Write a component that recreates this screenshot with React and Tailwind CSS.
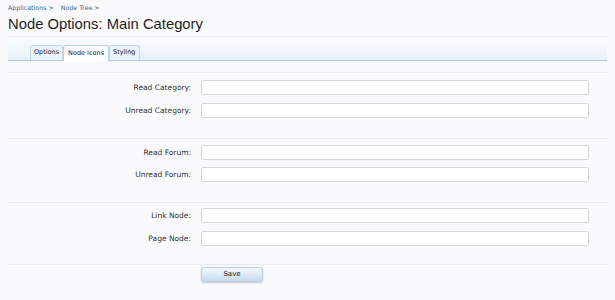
import React from 'react';

function Row({ label }) {
  return (
    <div className="flex items-center">
      <label className="w-[183px] text-right text-[7.5px] text-[#333]">{label}</label>
      <input type="text" className="ml-[10px] h-[15px] w-[388px] rounded-[2px] border border-[#d8d8d8] bg-white outline-none" />
    </div>
  );
}

export default function App() {
  const tabs = ['Options', 'Node Icons', 'Styling'];
  return (
    <div className="h-[300px] w-[615px] overflow-hidden bg-[#fafafc] px-[8px] font-['DejaVu_Sans',sans-serif]">
      {/* breadcrumb */}
      <div className="flex gap-[7px] pt-[3px] text-[6.3px] leading-[9px] text-[#356392]">
        <span>Applications &gt;</span>
        <span>Node Tree &gt;</span>
      </div>
      <h1 className="h-[24px] pt-[1px] font-['Liberation_Sans',sans-serif] text-[14.8px] leading-[22px] text-[#1e1e1e]">
        Node Options: Main Category
      </h1>

      {/* tab bar */}
      <div className="flex h-[25px] items-end border-t border-b border-t-[#e6ebf2] border-b-[#a9c8e6] bg-gradient-to-b from-[#fbfcfe] to-[#e7f0f9] pl-[22px]">
        {tabs.map((t) => (
          <div
            key={t}
            className={
              t === 'Node Icons'
                ? '-mb-px flex h-[16px] items-center rounded-t-[3px] border border-b-0 border-[#b8d0e8] bg-white px-[4px] text-[6.5px] text-[#222]'
                : 'flex h-[15px] items-center rounded-t-[3px] border border-b-0 border-[#c4d7ea] bg-[#eaf2fa] px-[3px] text-[6.5px] text-[#222]'
            }
          >
            {t}
          </div>
        ))}
      </div>

      {/* form */}
      <div className="mt-[11px]">
        <div className="flex flex-col gap-[8px] border-t border-[#e9eaf0] pt-[7px] pb-[20px]">
          <Row label="Read Category:" />
          <Row label="Unread Category:" />
        </div>
        <div className="flex flex-col gap-[7px] border-t border-[#e9eaf0] pt-[6px] pb-[20px]">
          <Row label="Read Forum:" />
          <Row label="Unread Forum:" />
        </div>
        <div className="flex flex-col gap-[8px] border-t border-[#e9eaf0] pt-[5px] pb-[18px]">
          <Row label="Link Node:" />
          <Row label="Page Node:" />
        </div>
        <div className="flex border-t border-[#e9eaf0] pt-[2px] pl-[193px]">
          <button className="h-[15px] w-[62px] rounded-[3px] border border-[#b9cfe3] bg-gradient-to-b from-[#f4f8fc] to-[#c6dbee] text-[7px] text-[#222] shadow-[0_1px_2px_rgba(0,0,0,0.2)]">
            Save
          </button>
        </div>
      </div>
    </div>
  );
}
